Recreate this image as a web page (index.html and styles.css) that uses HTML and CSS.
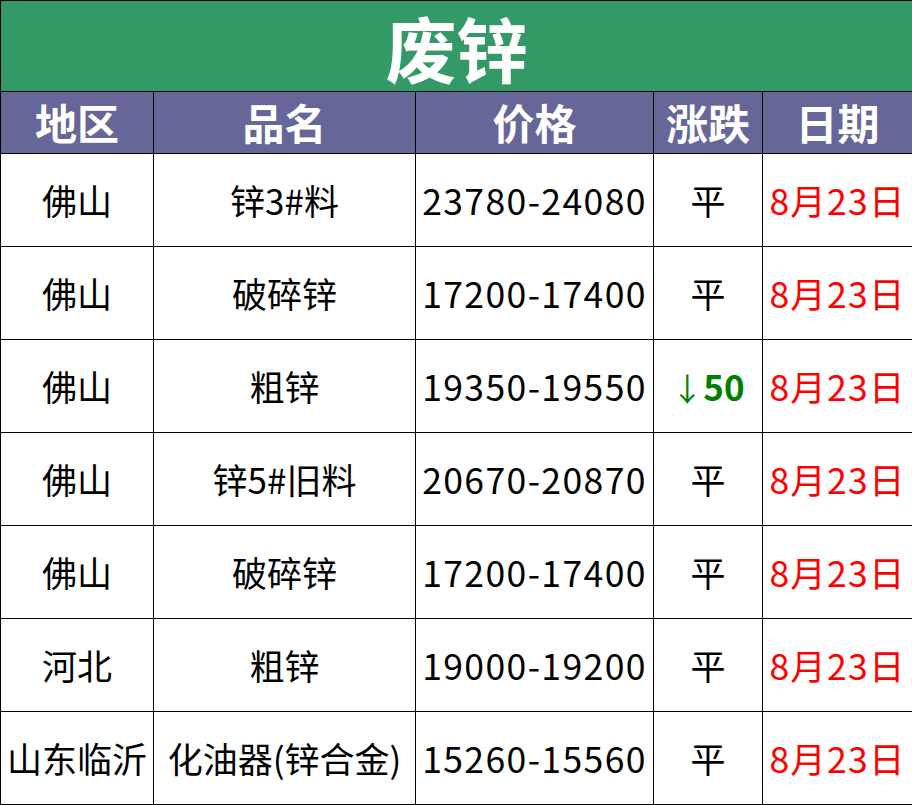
FILE: index.html
```html
<!DOCTYPE html>
<html lang="zh">
<head>
<meta charset="utf-8">
<link rel="stylesheet" href="styles.css">
</head>
<body>
<table class="sheet">
  <colgroup>
    <col class="c1"><col class="c2"><col class="c3"><col class="c4"><col class="c5">
  </colgroup>
  <tr class="title-row"><td colspan="5">废锌</td></tr>
  <tr class="head-row"><th>地区</th><th>品名</th><th>价格</th><th>涨跌</th><th>日期</th></tr>
  <tr><td>佛山</td><td>锌3#料</td><td class="num">23780-24080</td><td>平</td><td class="date">8月23日</td></tr>
  <tr><td>佛山</td><td>破碎锌</td><td class="num">17200-17400</td><td>平</td><td class="date">8月23日</td></tr>
  <tr><td>佛山</td><td>粗锌</td><td class="num">19350-19550</td><td class="down"><span class="arrow">↓</span>50</td><td class="date">8月23日</td></tr>
  <tr><td>佛山</td><td>锌5#旧料</td><td class="num">20670-20870</td><td>平</td><td class="date">8月23日</td></tr>
  <tr><td>佛山</td><td>破碎锌</td><td class="num">17200-17400</td><td>平</td><td class="date">8月23日</td></tr>
  <tr><td>河北</td><td>粗锌</td><td class="num">19000-19200</td><td>平</td><td class="date">8月23日</td></tr>
  <tr><td>山东临沂</td><td>化油器(锌合金)</td><td class="num">15260-15560</td><td>平</td><td class="date">8月23日</td></tr>
</table>
</body>
</html>
```
FILE: styles.css
```css
html, body {
  margin: 0;
  padding: 0;
  background: #ffffff;
}
.sheet {
  width: 912px;
  border-collapse: collapse;
  table-layout: fixed;
  font-family: "Noto Sans CJK SC", "Noto Sans", sans-serif;
}
.c1 { width: 153px; }
.c2 { width: 262px; }
.c3 { width: 238px; }
.c4 { width: 109px; }
.c5 { width: 150px; }
.sheet td, .sheet th {
  border: 1.5px solid #000;
  text-align: center;
  vertical-align: middle;
  padding: 0;
  white-space: nowrap;
  height: 92px;
  font-size: 35px;
  font-weight: 400;
  color: #000;
  line-height: 1.2;
}
.title-row td {
  height: 90px;
  background: #339966;
  color: #fff;
  font-size: 71px;
  font-weight: 700;
  line-height: 80px;
}
.head-row th {
  height: 61px;
  background: #666699;
  color: #fff;
  font-size: 42px;
  font-weight: 700;
}
.sheet td.num {
  letter-spacing: 1.4px;
  font-size: 35.5px;
}
.sheet td.date {
  color: #ff0000;
  letter-spacing: 1.2px;
  font-size: 35.5px;
}
.sheet td.down {
  color: #008000;
  font-weight: 700;
}
.arrow {
  font-weight: 400;
  font-size: 32px;
}
```
